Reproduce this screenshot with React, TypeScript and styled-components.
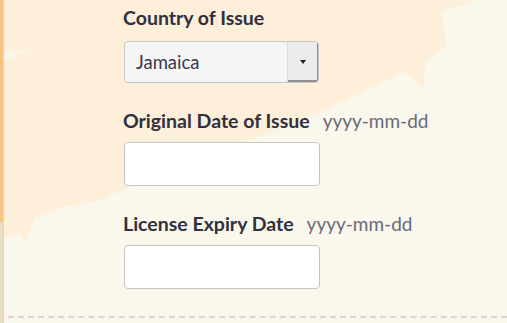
import React from "react";
import styled, { createGlobalStyle } from "styled-components";

const Global = createGlobalStyle`
  html, body { margin: 0; padding: 0; background: #faf7ed; }
  body { font-family: "Lato", "Open Sans", sans-serif; }
`;

const Frame = styled.div`
  position: relative;
  display: flex;
  width: 507px;
  height: 323px;
  overflow: hidden;
  background: #faf7ed;
`;

const Backdrop = styled.svg`
  position: absolute;
  inset: 0;
  z-index: 0;
`;

const Rail = styled.div`
  position: relative;
  z-index: 1;
  width: 4px;
  flex: none;
  background:
    linear-gradient(to right, transparent 3px, #ddd8ce 3px),
    linear-gradient(to bottom, #f4c584 0 222px, #e9ddc4 222px);
`;

const Content = styled.div`
  position: relative;
  z-index: 1;
  flex: 1;
  height: 318px;
  box-sizing: border-box;
  padding: 7px 0 0 119px;
  border-bottom: 2px dashed #dbd7ce;
  margin-left: 4px;
  display: flex;
  flex-direction: column;
  gap: 27px;
`;

const Field = styled.div<{ $gap?: number }>`
  display: flex;
  flex-direction: column;
  align-items: flex-start;
  gap: ${(p) => p.$gap ?? 10}px;
`;

const LabelRow = styled.div`
  display: flex;
  align-items: baseline;
  gap: 13px;
  height: 22px;
  line-height: 22px;
  margin-left: -4px;
  white-space: nowrap;
`;

const Label = styled.label`
  font-size: 19.5px;
  font-weight: 700;
  color: #30303f;
`;

const Hint = styled.span`
  font-size: 19px;
  font-weight: 400;
  color: #6a6a7c;
`;

const Select = styled.div`
  display: flex;
  width: 195px;
  height: 42px;
  box-sizing: border-box;
  border: 1px solid #c8c8c8;
  border-radius: 4px;
  background: #f5f5f5;
  overflow: hidden;
  margin-left: -3px;
`;

const SelectValue = styled.span`
  flex: 1;
  display: flex;
  align-items: center;
  padding-left: 11px;
  font-size: 18.5px;
  color: #3a3a4e;
`;

const SelectButton = styled.span`
  width: 30px;
  flex: none;
  display: flex;
  align-items: center;
  justify-content: center;
  background: #ececec;
  border-left: 1px solid #dcdcdc;
  box-shadow: inset -1px -2px 0 #8e8e8e;
  &::after {
    content: "";
    border-left: 3px solid transparent;
    border-right: 3px solid transparent;
    border-top: 4px solid #222;
    margin-top: -1px;
  }
`;

const Input = styled.input`
  width: 196px;
  height: 44px;
  box-sizing: border-box;
  border: 1.5px solid #c6c6c6;
  border-radius: 4px;
  background: #fff;
  margin: 0 0 0 -3px;
  outline: none;
`;

export default function App() {
  return (
    <>
      <Global />
      <Frame>
        <Backdrop width="507" height="323" viewBox="0 0 507 323">
          <polygon
            fill="#fdefda"
            points="0,0 476,0 442,12 446,46 425,63 424,88 405,72 330,108 250,140 170,170 100,200 60,208 35,218 25,241 20,233 8,238 0,234"
          />
          <polygon fill="#fbf5e8" points="4,50 30,51 4,61" />
        </Backdrop>
        <Rail />
        <Content>
          <Field $gap={12}>
            <LabelRow>
              <Label>Country of Issue</Label>
            </LabelRow>
            <Select>
              <SelectValue>Jamaica</SelectValue>
              <SelectButton />
            </Select>
          </Field>
          <Field>
            <LabelRow>
              <Label>Original Date of Issue</Label>
              <Hint>yyyy-mm-dd</Hint>
            </LabelRow>
            <Input />
          </Field>
          <Field>
            <LabelRow>
              <Label>License Expiry Date</Label>
              <Hint>yyyy-mm-dd</Hint>
            </LabelRow>
            <Input />
          </Field>
        </Content>
      </Frame>
    </>
  );
}
